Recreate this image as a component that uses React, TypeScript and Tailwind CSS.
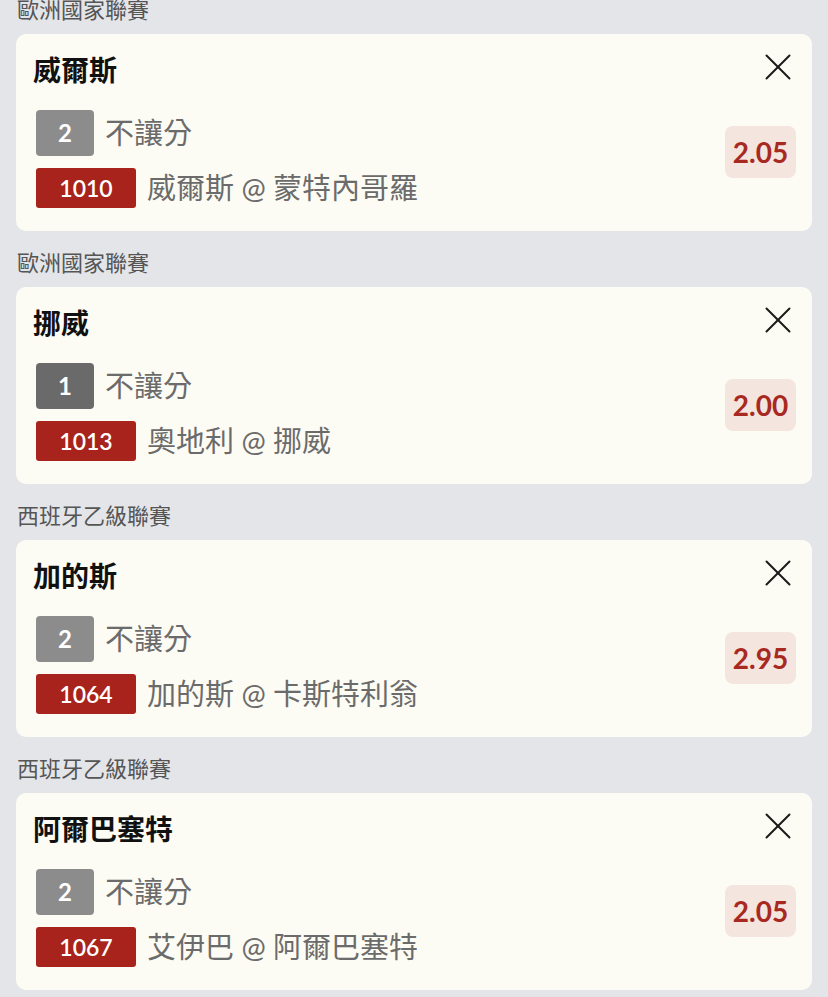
import React from "react";

type Bet = {
  league: string;
  team: string;
  pick: string;
  pickDark?: boolean;
  code: string;
  match: string;
  odds: string;
};

const bets: Bet[] = [
  { league: "歐洲國家聯賽", team: "威爾斯", pick: "2", code: "1010", match: "威爾斯 @ 蒙特內哥羅", odds: "2.05" },
  { league: "歐洲國家聯賽", team: "挪威", pick: "1", pickDark: true, code: "1013", match: "奧地利 @ 挪威", odds: "2.00" },
  { league: "西班牙乙級聯賽", team: "加的斯", pick: "2", code: "1064", match: "加的斯 @ 卡斯特利翁", odds: "2.95" },
  { league: "西班牙乙級聯賽", team: "阿爾巴塞特", pick: "2", code: "1067", match: "艾伊巴 @ 阿爾巴塞特", odds: "2.05" },
];

const cjk = { fontFamily: "Lato, 'Noto Sans CJK TC', sans-serif" };

function CloseIcon() {
  return (
    <svg width="26" height="26" viewBox="0 0 26 26" fill="none" stroke="#1a1a1a" strokeWidth="2" strokeLinecap="round">
      <path d="M1.5 1.5 L24.5 24.5" />
      <path d="M24.5 1.5 L1.5 24.5" />
    </svg>
  );
}

function Card({ bet }: { bet: Bet }) {
  return (
    <div className="bg-[#fdfcf4] rounded-[10px] pt-[18px] pb-[23px] pl-[17px] pr-[16px]">
      <div className="flex items-start justify-between">
        <div className="text-[28px] leading-[36px] font-bold text-[#111111]">{bet.team}</div>
        <div className="mt-[2px] mr-[5px]">
          <CloseIcon />
        </div>
      </div>
      <div className="flex items-start justify-between mt-[22px] pl-[3px]">
        <div className="flex flex-col gap-[12px]">
          <div className="flex items-center gap-[11px]">
            <div
              className={`w-[58px] h-[46px] rounded-[4px] flex items-center justify-center text-white text-[24px] font-bold ${
                bet.pickDark ? "bg-[#6a6a6a]" : "bg-[#8c8c8c]"
              }`}
            >
              {bet.pick}
            </div>
            <div className="text-[29px] text-[#6b6b6b] leading-[36px]">不讓分</div>
          </div>
          <div className="flex items-center gap-[11px]">
            <div className="w-[100px] h-[40px] rounded-[3px] bg-[#a8231b] flex items-center justify-center text-white text-[23px] font-semibold">
              {bet.code}
            </div>
            <div className="text-[29px] text-[#6b6b6b] leading-[36px]">{bet.match}</div>
          </div>
        </div>
        <div className="mt-[16px] w-[71px] h-[52px] rounded-[8px] bg-[#f4e5df] flex items-center justify-center text-[28px] font-bold text-[#a8291f]">
          {bet.odds}
        </div>
      </div>
    </div>
  );
}

export default function App() {
  return (
    <div className="min-h-[997px] bg-[#e4e5e9] px-[16px] overflow-hidden" style={cjk}>
      <div className="-mt-[22px]">
        {bets.map((b, i) => (
          <div key={i}>
            <div className="pt-[16px] pb-[8px] pl-[1px] text-[22px] leading-[32px] text-[#555555]">{b.league}</div>
            <Card bet={b} />
          </div>
        ))}
      </div>
    </div>
  );
}
